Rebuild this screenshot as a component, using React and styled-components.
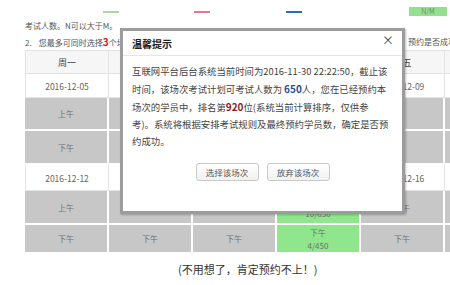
import React from 'react'
import styled, { createGlobalStyle } from 'styled-components'

const GlobalStyle = createGlobalStyle`
    html, body {
        margin: 0;
        padding: 0;
        background: #fff;
        font-family: "Noto Sans CJK SC", "Noto Sans", sans-serif;
    }
`

const days = ['周一', '周二', '周三', '周四', '周五', '周六']

const weeks = [
    {
        dateH: 24, amH: 33, pmH: 34,
        dates: ['2016-12-05', '', '', '', '2016-12-09', ''],
        am: [{ t: '上午' }, { t: '' }, { t: '' }, { t: '' }, { t: '' }, { t: '' }],
        pm: [{ t: '下午' }, { t: '' }, { t: '' }, { t: '' }, { t: '' }, { t: '' }],
    },
    {
        dateH: 26, amH: 34, pmH: 29,
        dates: ['2016-12-12', '', '', '', '2016-12-16', ''],
        am: [{ t: '上午' }, { t: '' }, { t: '' }, { t: '上午', n: '10/650', open: true }, { t: '上午' }, { t: '' }],
        pm: [{ t: '下午' }, { t: '下午' }, { t: '下午' }, { t: '下午', n: '4/450', open: true }, { t: '下午' }, { t: '' }],
    },
]

const App = () => {
    return (
        <>
            <GlobalStyle />
            <Page>
                <Legend>
                    <LegendLine color="#a6d99a" offset={78} />
                    <LegendLine color="#e27c8c" offset={75} />
                    <LegendLine color="#2a6cb8" offset={76} />
                    <LegendBox>N/M</LegendBox>
                </Legend>
                <Note>考试人数。N可以大于M。</Note>
                <Note tall>
                    <span>2.&nbsp;&nbsp;&nbsp;&nbsp;您最多可同时选择<Red>3</Red>个场次进行预约</span>
                    <NoteTail>预约是否成功</NoteTail>
                </Note>

                <Grid>
                    <Row>
                        {days.map(d => <HeadCell key={d}>{d}</HeadCell>)}
                    </Row>
                    {weeks.map((w, i) => (
                        <React.Fragment key={i}>
                            <Row>
                                {w.dates.map((d, j) => <DateCell key={j} h={w.dateH}>{d}</DateCell>)}
                            </Row>
                            <Row>
                                {w.am.map((c, j) => (
                                    <Slot key={j} h={w.amH} open={c.open}>
                                        <span>{c.t}</span>
                                        {c.n && <span>{c.n}</span>}
                                    </Slot>
                                ))}
                            </Row>
                            <Row>
                                {w.pm.map((c, j) => (
                                    <Slot key={j} h={w.pmH} open={c.open}>
                                        <span>{c.t}</span>
                                        {c.n && <span>{c.n}</span>}
                                    </Slot>
                                ))}
                            </Row>
                        </React.Fragment>
                    ))}
                </Grid>

                <Caption>(不用想了，肯定预约不上！)</Caption>

                <Dialog>
                    <DialogHead>
                        <DialogTitle>温馨提示</DialogTitle>
                        <Close>×</Close>
                    </DialogHead>
                    <DialogBody>
                        互联网平台后台系统当前时间为2016-11-30 22:22:50，截止该<br />
                        时间，该场次考试计划可考试人数为 <Blue>650</Blue>人，您在已经预约本<br />
                        场次的学员中，排名第<DarkRed>920</DarkRed>位(系统当前计算排序，仅供参<br />
                        考)。系统将根据安排考试规则及最终预约学员数，确定是否预<br />
                        约成功。
                    </DialogBody>
                    <Buttons>
                        <Button>选择该场次</Button>
                        <Button>放弃该场次</Button>
                    </Buttons>
                </Dialog>
            </Page>
        </>
    )
}

export default App

const Page = styled.div`
    position: relative;
    width: 450px;
    height: 285px;
    overflow: hidden;
    padding-left: 25px;
    box-sizing: border-box;
`
const Legend = styled.div`
    display: flex;
    align-items: center;
    height: 13px;
    margin-top: 5px;
`
const LegendLine = styled.span`
    display: block;
    width: 16px;
    height: 2px;
    background: ${({color}) => color};
    margin-left: ${({offset}) => offset}px;
`
const LegendBox = styled.span`
    margin-left: 107px;
    width: 38px;
    height: 9px;
    background: #94e08f;
    color: #6a8f6a;
    font-size: 7px;
    line-height: 9px;
    text-align: center;
`
const Note = styled.div`
    display: flex;
    align-items: center;
    height: ${({tall}) => tall ? 18 : 14}px;
    font-size: 8px;
    color: #555;
    white-space: nowrap;
`
const Red = styled.b`
    color: #e0201c;
    font-size: 10px;
`
const NoteTail = styled.span`
    margin-left: auto;
    width: 42px;
    overflow: hidden;
`
const Grid = styled.div`
    width: 425px;
    overflow: hidden;
    font-size: 8px;
    color: #666;
`
const Row = styled.div`
    display: grid;
    grid-template-columns: repeat(6, 84px);
`
const HeadCell = styled.div`
    height: 24px;
    box-sizing: border-box;
    display: flex;
    align-items: center;
    justify-content: center;
    background: #f6f6f6;
    border-top: 1px solid #e2e2e2;
    border-right: 1px solid #e2e2e2;
    border-bottom: 1px solid #e2e2e2;
    &:first-child { border-left: 1px solid #e2e2e2; }
    font-size: 9px;
    color: #444;
`
const DateCell = styled.div`
    height: ${({h}) => h}px;
    box-sizing: border-box;
    display: flex;
    align-items: center;
    justify-content: center;
    border-right: 1px solid #e4e4e4;
    border-bottom: 1px solid #e4e4e4;
    &:first-child { border-left: 1px solid #e4e4e4; }
    color: #666;
    font-size: 8.5px;
`
const Slot = styled.div`
    height: ${({h}) => h}px;
    box-sizing: border-box;
    display: flex;
    flex-direction: column;
    align-items: center;
    justify-content: center;
    background: ${({open}) => open ? '#8fe68c' : '#c7c7c7'};
    border-right: 2px solid #fff;
    border-bottom: 2px solid #fff;
    color: #707070;
    font-size: 8px;
    line-height: 13px;
`
const Caption = styled.div`
    margin-top: 7px;
    padding-left: 153px;
    font-size: 11px;
    color: #333;
`
const Dialog = styled.div`
    position: absolute;
    left: 120px;
    top: 28px;
    width: 285px;
    height: 186px;
    box-sizing: border-box;
    background: #fff;
    border: 3px solid #9c9c9c;
    box-shadow: 1px 1px 2px rgba(0,0,0,0.25);
    display: flex;
    flex-direction: column;
`
const DialogHead = styled.div`
    display: flex;
    align-items: center;
    justify-content: space-between;
    height: 24px;
    padding: 0 8px 0 9px;
    border-bottom: 1px solid #e6e6e6;
`
const DialogTitle = styled.span`
    font-size: 10px;
    font-weight: bold;
    color: #222;
`
const Close = styled.span`
    font-size: 12px;
    color: #444;
    margin-top: -8px;
`
const DialogBody = styled.p`
    margin: 7px 0 0;
    padding: 0 0 0 9px;
    white-space: nowrap;
    font-size: 9.4px;
    line-height: 17px;
    color: #444;
`
const Blue = styled.b`
    color: #1e4f9c;
    font-size: 10px;
`
const DarkRed = styled.b`
    color: #8e1c1c;
    font-size: 10px;
`
const Buttons = styled.div`
    display: flex;
    justify-content: center;
    gap: 8px;
    margin-top: 13px;
`
const Button = styled.button`
    width: 63px;
    height: 18px;
    padding: 0;
    border: 1px solid #c9c9c9;
    border-radius: 3px;
    background: linear-gradient(#fff, #f1f1f1);
    font-family: inherit;
    font-size: 8.5px;
    color: #555;
`
